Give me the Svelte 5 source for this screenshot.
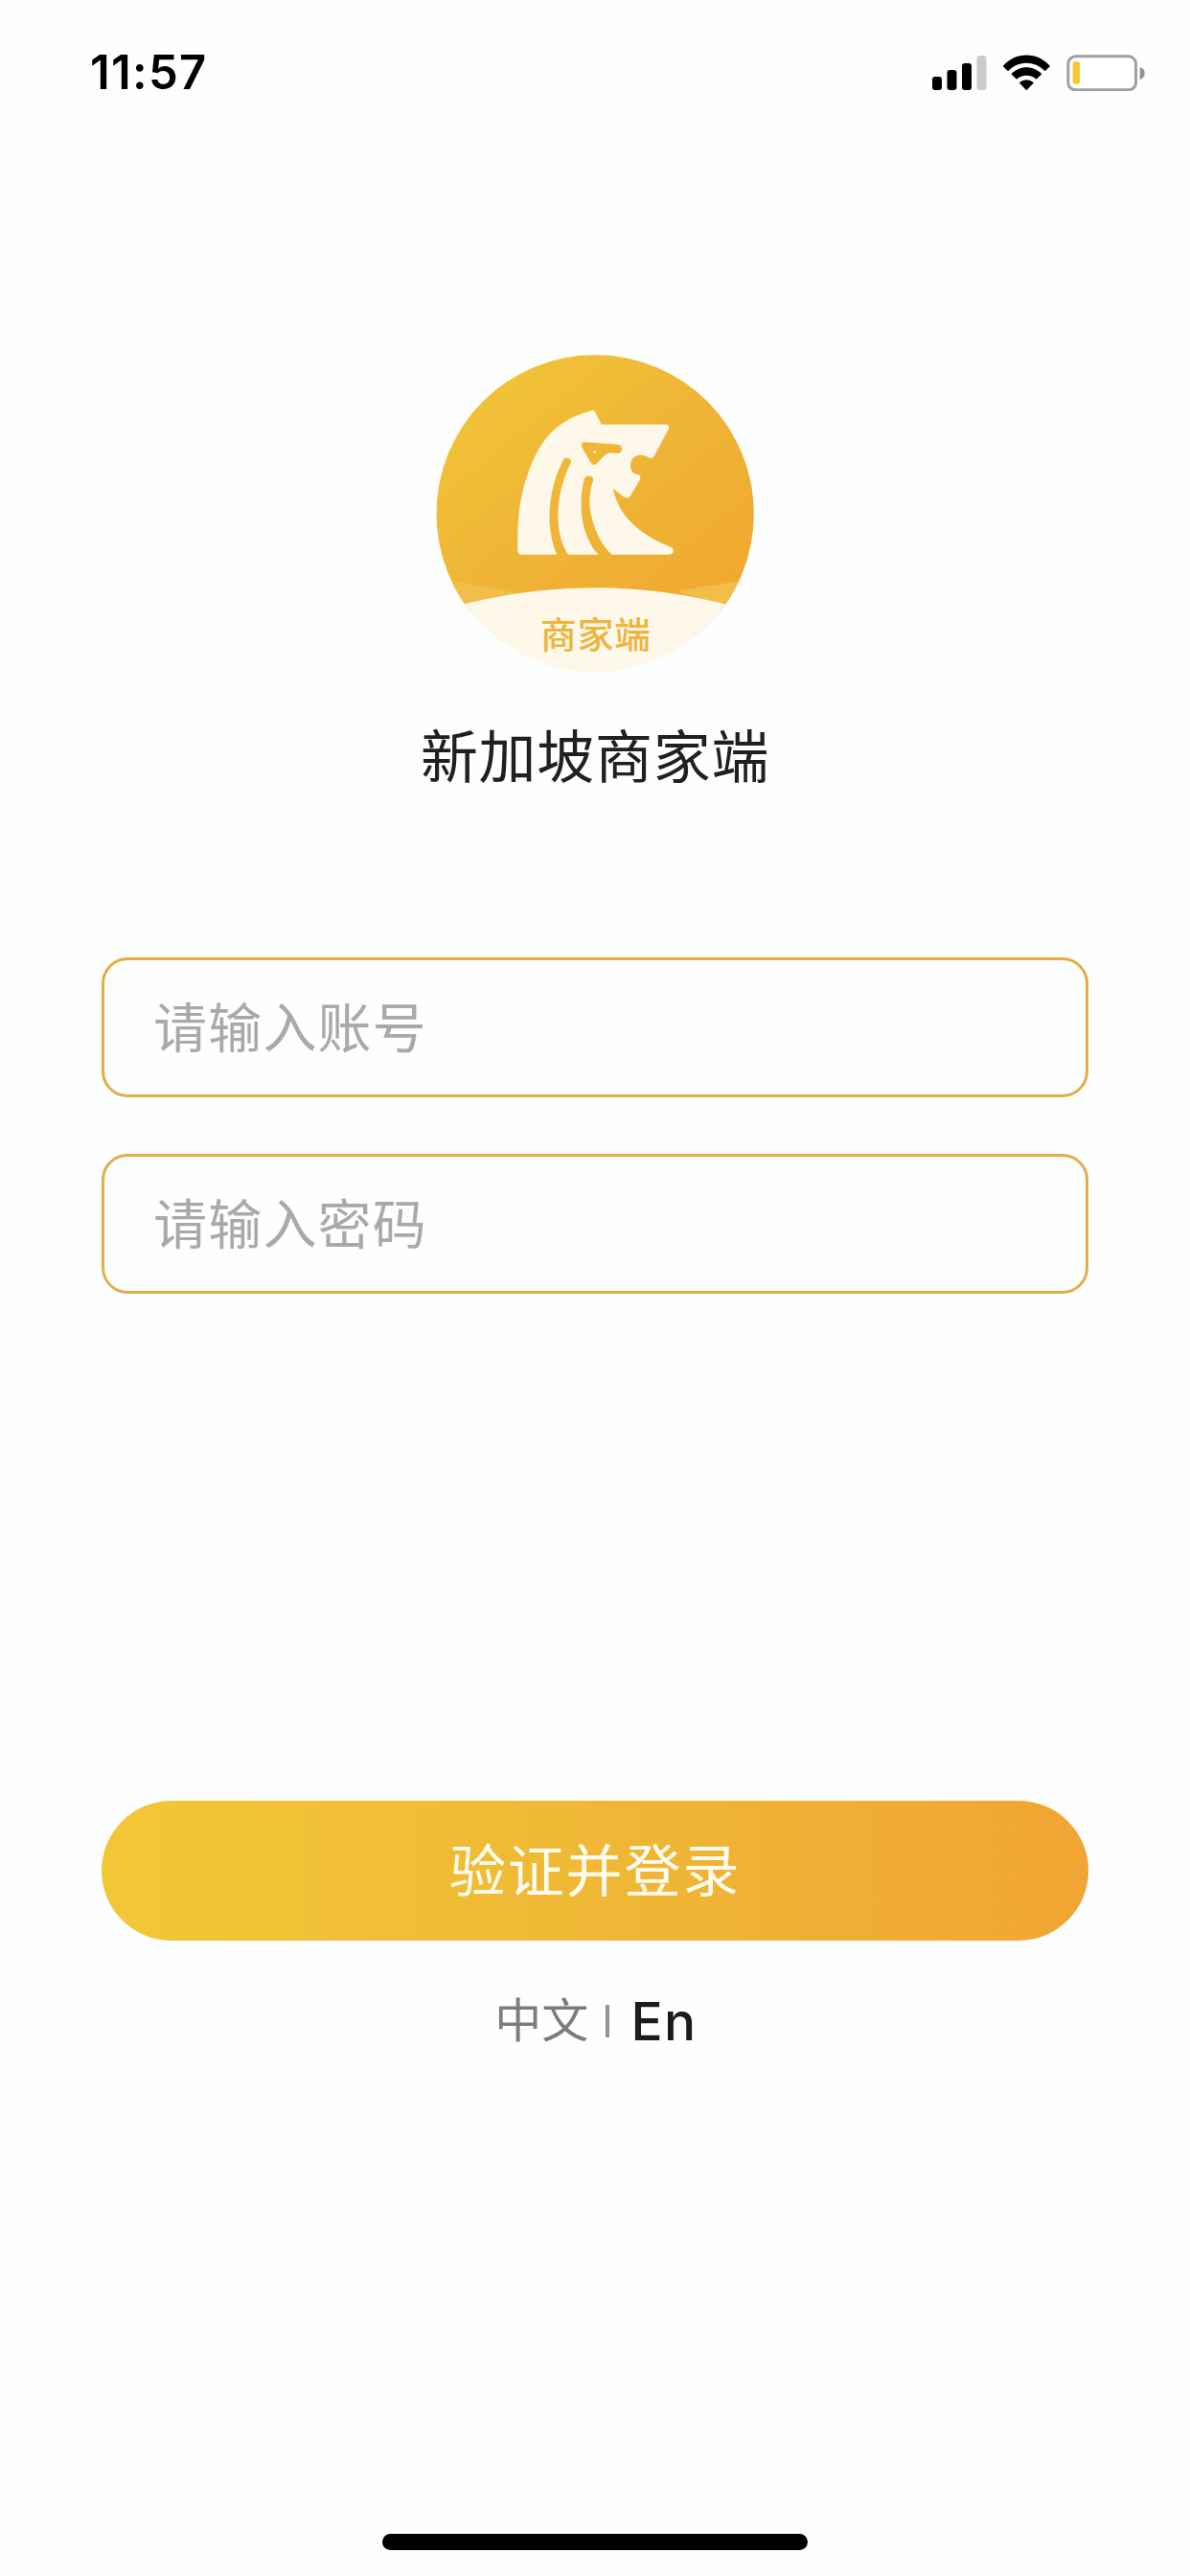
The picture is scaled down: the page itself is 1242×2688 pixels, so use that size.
<script>
  let account = '';
  let password = '';
  let lang = 'en';

  const bars = [
    { x: 0, height: 14 },
    { x: 15.5, height: 21 },
    { x: 31, height: 28 },
    { x: 46.5, height: 36, off: true }
  ];

  function login() {
    console.log('login', account);
  }
</script>

<div class="screen">
  <header class="status-bar">
    <span class="time">11:57</span>
    <div class="status-icons">
      <svg class="signal" viewBox="0 0 57 36">
        {#each bars as bar}
          <rect
            class:off={bar.off}
            x={bar.x}
            y={36 - bar.height}
            width="10"
            height={bar.height}
            rx="3"
          />
        {/each}
      </svg>
      <svg class="wifi" viewBox="290 50 150 112">
        <path d="M292 86C332 40 400 40 440 86L424 102C390 68 342 68 308 102Z" />
        <path d="M318 111C345 83 387 83 414 111L397 127C380 111 352 111 335 127Z" />
        <path d="M343 138Q366 120 389 138L366 162Z" />
      </svg>
      <svg class="battery" viewBox="490 50 246 114">
        <rect class="case" x="495.500" y="55.500" width="212" height="105" rx="23" />
        <rect class="level" x="510" y="72" width="22" height="70" rx="8" />
        <path class="cap" d="M720 89Q735 93 735 108T720 129Z" />
      </svg>
    </div>
  </header>

  <main>
    <div class="brand">
      <svg class="logo" viewBox="46 45 996 996">
        <defs>
          <linearGradient id="gold" x1="0.1" y1="0.1" x2="0.9" y2="0.9">
            <stop offset="0" stop-color="#f1c437" />
            <stop offset="0.5" stop-color="#efb536" />
            <stop offset="1" stop-color="#f0a92f" />
          </linearGradient>
          <clipPath id="disc">
            <circle cx="544.500" cy="543" r="497" />
          </clipPath>
        </defs>
        <g clip-path="url(#disc)">
          <path fill="url(#gold)" d="M46 45H1044V860H46Z" />
          <path class="wave" d="M40 750Q180 764 290 790L130 830L40 850Z" />
          <path class="wave" d="M1050 750Q930 760 800 786L955 830L1050 850Z" />
          <path class="band" d="M40 852Q290 775 545 775T1050 855V1060H40Z" />
        </g>
        <path
          class="lion"
          d="M531 221Q541 217 546 227L564 264H765Q780 264 774 279L730 361Q725 372 713 368C690 350 655 361 655 390C655 414 668 420 681 421Q690 425 684 438L655 487Q649 496 638 492C622 485 614 473 601 465C617 550 685 610 781 647Q792 652 789 662Q786 671 774 671H597C550 630 527 550 527 500Q529 463 538 440Q541 427 528 425Q514 422 510 437C491 510 498 610 554 671H460C413 600 420 480 468 384Q472 371 459 369Q447 366 443 378C395 470 388 590 425 671H315Q301 671 302 655C301 570 306 500 330 430C364 320 420 249 531 221Z"
        />
        <path
          class="eye"
          d="M513 319L614 326Q628 328 628 340Q628 354 614 354Q590 349 577 358L548 387Q539 394 531 383L503 335Q498 320 513 319Z"
        />
        <circle class="lion" cx="543" cy="350" r="4" />
        <text x="547" y="963" text-anchor="middle">商家端</text>
      </svg>
      <h1>新加坡商家端</h1>
    </div>

    <form on:submit|preventDefault={login}>
      <input type="text" placeholder="请输入账号" bind:value={account} />
      <input type="password" placeholder="请输入密码" bind:value={password} />
      <button class="submit">验证并登录</button>
    </form>

    <div class="languages">
      <button class:active={lang === 'zh'} on:click={() => (lang = 'zh')}>中文</button>
      <span class="divider"></span>
      <button class="en" class:active={lang === 'en'} on:click={() => (lang = 'en')}>En</button>
    </div>
  </main>

  <div class="home-indicator"></div>
</div>

<style>
  :global(body) {
    margin: 0;
    background: #fdfefe;
  }

  .screen {
    box-sizing: border-box;
    display: flex;
    flex-direction: column;
    width: 1242px;
    height: 2688px;
    padding-bottom: 27px;
    overflow: hidden;
    background: #fdfefe;
    font-family: Inter, 'Noto Sans CJK SC', sans-serif;
  }

  .status-bar {
    display: flex;
    justify-content: space-between;
    height: 370px;
    padding: 57px 47px 0 94px;
    box-sizing: border-box;
  }

  .time {
    font-size: 49px;
    font-weight: 600;
    line-height: 38px;
    letter-spacing: 1.3px;
    color: #000;
  }

  .status-icons {
    display: flex;
    align-items: flex-start;
  }

  .signal {
    width: 57px;
    height: 36px;
    margin: 1px 16px 0 0;
  }

  .signal .off {
    fill: #cbcbcd;
  }

  .wifi {
    width: 50px;
    height: 37.3px;
    margin-right: 17px;
  }

  .battery {
    width: 82px;
    height: 38px;
  }

  .case {
    fill: #fff;
    stroke: #a09fa5;
    stroke-width: 9;
  }

  .level {
    fill: #f6c52f;
  }

  .cap {
    fill: #929296;
  }

  main {
    display: flex;
    flex-direction: column;
    padding: 0 106px;
  }

  .brand {
    display: flex;
    flex-direction: column;
    align-items: center;
    height: 629px;
  }

  .logo {
    width: 332px;
    height: 332px;
  }

  .wave {
    fill: #f1bf49;
  }

  .band,
  .lion {
    fill: #fef8ea;
  }

  .eye {
    fill: #efb637;
  }

  .logo text {
    font-family: 'Noto Sans CJK SC', sans-serif;
    font-size: 113px;
    font-weight: 500;
    letter-spacing: 3px;
    fill: #edb53d;
  }

  h1 {
    margin: 44px 0 0;
    font-size: 60px;
    font-weight: 400;
    line-height: 88px;
    letter-spacing: 0.7px;
    color: #20201c;
  }

  form {
    display: flex;
    flex-direction: column;
    gap: 59px;
  }

  input {
    box-sizing: border-box;
    width: 100%;
    height: 146px;
    padding: 1px 51px 0;
    border: 3px solid #e5ac48;
    border-radius: 27px;
    outline: none;
    background: #fdfefe;
    font-family: inherit;
    font-size: 56px;
    letter-spacing: 1.2px;
  }

  input::placeholder {
    color: #a9a9ab;
    opacity: 1;
  }

  .submit {
    height: 146px;
    margin-top: 470px;
    padding: 0 0 7px;
    border: none;
    border-radius: 73px;
    background: linear-gradient(90deg, #f2c737, #efb635 55%, #f1a534);
    color: #fffdf2;
    font-family: inherit;
    font-size: 59px;
    letter-spacing: 1.8px;
  }

  .languages {
    display: flex;
    align-items: center;
    justify-content: center;
    height: 168px;
    padding-left: 2px;
  }

  .languages button {
    padding: 0;
    border: none;
    background: none;
    color: #7c7c7e;
    font-family: inherit;
    font-size: 49px;
    line-height: 72px;
  }

  .divider {
    width: 4px;
    height: 34px;
    margin: 0 22px 0 18px;
    background: #949496;
  }

  .languages .en {
    font-size: 55px;
    font-weight: 500;
    letter-spacing: 1.5px;
  }

  .languages .active {
    color: #1c1d19;
  }

  .home-indicator {
    width: 444px;
    height: 17px;
    margin: auto auto 0;
    border-radius: 9px;
    background: #000;
  }
</style>
